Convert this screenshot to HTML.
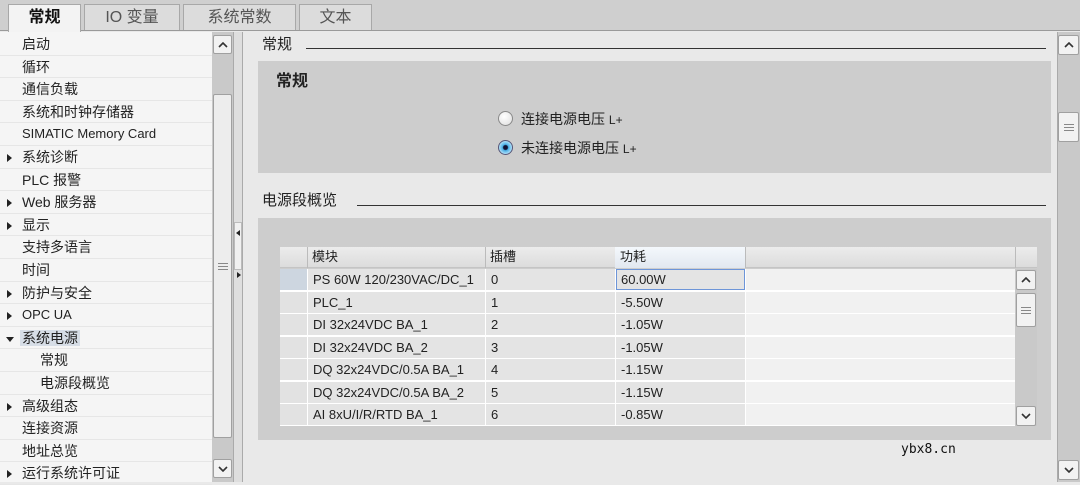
<!DOCTYPE html>
<html><head><meta charset="utf-8"><style>
*{margin:0;padding:0;box-sizing:border-box}
body{width:1080px;height:482px;overflow:hidden;background:#e9e9e9;font-family:"Liberation Sans","Noto Sans CJK SC",sans-serif;font-size:14px;color:#222;position:relative}
.a{position:absolute}
.tab{position:absolute;top:4px;height:26px;border:1px solid #a8a8a8;border-bottom:none;background:#dcdcdc;color:#555;font-size:16px;text-align:center;line-height:25px}
.row{position:absolute;left:0;width:212px;height:22.6px;border-bottom:1px solid #e6e6e6;line-height:22px;font-size:14px}
.tri{position:absolute;left:7px;top:8px;width:0;height:0;border-left:5px solid #222;border-top:4px solid transparent;border-bottom:4px solid transparent}
.btn{position:absolute;background:#f2f2f2;border:1px solid #a0a0a0;border-radius:2px;font-size:11px;text-align:center;color:#444;display:flex;align-items:center;justify-content:center}
.td{position:absolute;height:21px;line-height:21px;font-size:13px;padding-left:5px;color:#222}
.grip{width:10px;height:7px;border-top:1px solid #888;border-bottom:1px solid #888;position:relative}
.grip:after{content:"";position:absolute;left:0;right:0;top:2px;height:1px;background:#888}
</style></head><body>
<div class="a" style="left:0;top:0;width:1080px;height:31px;background:#cfcfcf;border-bottom:1px solid #9a9a9a"></div>
<div class="tab" style="left:8px;width:73px;background:#f3f3f3;color:#111;font-weight:bold;height:28px">常规</div>
<div class="tab" style="left:84px;width:96px">IO 变量</div>
<div class="tab" style="left:183px;width:113px">系统常数</div>
<div class="tab" style="left:299px;width:73px">文本</div>

<div class="a" style="left:0;top:32px;width:212px;height:450px;background:#f5f5f5"></div>
<div class="row" style="top:33px;padding-left:22px">启动</div>
<div class="row" style="top:55.6px;padding-left:22px">循环</div>
<div class="row" style="top:78.2px;padding-left:22px">通信负载</div>
<div class="row" style="top:100.8px;padding-left:22px">系统和时钟存储器</div>
<div class="row" style="top:123.4px;padding-left:22px;font-size:13px">SIMATIC Memory Card</div>
<div class="row" style="top:146px;padding-left:22px"><i class="tri"></i>系统诊断</div>
<div class="row" style="top:168.6px;padding-left:22px">PLC 报警</div>
<div class="row" style="top:191.2px;padding-left:22px"><i class="tri"></i>Web 服务器</div>
<div class="row" style="top:213.8px;padding-left:22px"><i class="tri"></i>显示</div>
<div class="row" style="top:236.4px;padding-left:22px">支持多语言</div>
<div class="row" style="top:259px;padding-left:22px">时间</div>
<div class="row" style="top:281.6px;padding-left:22px"><i class="tri"></i>防护与安全</div>
<div class="row" style="top:304.2px;padding-left:22px;font-size:13px"><i class="tri"></i>OPC UA</div>
<div class="row" style="top:326.8px;padding-left:20px"><i class="tri" style="left:6px;top:10px;border-top:5px solid #222;border-left:4px solid transparent;border-right:4px solid transparent;border-bottom:none"></i><span style="background:#d6dde6;padding:0 2px">系统电源</span></div>
<div class="row" style="top:349.4px;padding-left:40px">常规</div>
<div class="row" style="top:372px;padding-left:40px">电源段概览</div>
<div class="row" style="top:394.6px;padding-left:22px"><i class="tri"></i>高级组态</div>
<div class="row" style="top:417.2px;padding-left:22px">连接资源</div>
<div class="row" style="top:439.8px;padding-left:22px">地址总览</div>
<div class="row" style="top:462.4px;padding-left:22px"><i class="tri"></i>运行系统许可证</div>

<div class="a" style="left:212px;top:32px;width:21px;height:450px;background:#c9c9c9"></div>
<div class="btn" style="left:213px;top:35px;width:19px;height:19px"><svg width="10" height="6"><path d="M1 5L5 1L9 5" fill="none" stroke="#333" stroke-width="1.6"/></svg></div>
<div class="btn" style="left:213px;top:94px;width:19px;height:344px;background:#ededed"><div class="grip"></div></div>
<div class="btn" style="left:213px;top:459px;width:19px;height:19px"><svg width="10" height="6"><path d="M1 1L5 5L9 1" fill="none" stroke="#333" stroke-width="1.6"/></svg></div>

<div class="a" style="left:233px;top:32px;width:10px;height:450px;background:#dedede;border-left:1px solid #aaa;border-right:1px solid #aaa"></div>
<div class="a" style="left:234px;top:222px;width:8px;height:48px;background:#f0f0f0;border:1px solid #bbb"></div>
<div class="a" style="left:236px;top:230px;border-right:4px solid #222;border-top:3px solid transparent;border-bottom:3px solid transparent"></div>
<div class="a" style="left:237px;top:272px;border-left:4px solid #222;border-top:3px solid transparent;border-bottom:3px solid transparent"></div>

<div class="a" style="left:262px;top:33px;font-size:15px">常规</div>
<div class="a" style="left:306px;top:48px;width:740px;height:1px;background:#333"></div>
<div class="a" style="left:258px;top:61px;width:793px;height:112px;background:#cdcdcd"></div>
<div class="a" style="left:276px;top:67px;font-size:16px;font-weight:bold">常规</div>
<div class="a" style="left:498px;top:111px;width:15px;height:15px;border-radius:50%;border:1px solid #888;background:radial-gradient(circle at 40% 35%,#fff,#ddd)"></div>
<div class="a" style="left:521px;top:109px;font-size:14px">连接电源电压 <span style="font-size:12px">L+</span></div>
<div class="a" style="left:498px;top:140px;width:15px;height:15px;border-radius:50%;border:1px solid #557;background:radial-gradient(circle,#113 0 2px,#4ab0e8 3px,#bfe6fa 7px)"></div>
<div class="a" style="left:521px;top:138px;font-size:14px">未连接电源电压 <span style="font-size:12px">L+</span></div>

<div class="a" style="left:262px;top:189px;font-size:15px">电源段概览</div>
<div class="a" style="left:357px;top:205px;width:689px;height:1px;background:#333"></div>
<div class="a" style="left:258px;top:218px;width:793px;height:222px;background:#cdcdcd"></div>

<div class="a" style="left:280px;top:247px;width:757px;height:21px;background:linear-gradient(#ececec,#dcdcdc);border-bottom:1px solid #c4c4c4"></div>
<div class="a" style="left:307px;top:247px;width:1px;height:21px;background:#bbb"></div>
<div class="a" style="left:485px;top:247px;width:1px;height:21px;background:#bbb"></div>
<div class="a" style="left:615px;top:247px;width:130px;height:21px;background:linear-gradient(#f4f8fc,#e2e8f0)"></div>
<div class="a" style="left:745px;top:247px;width:1px;height:21px;background:#bbb"></div>
<div class="a" style="left:1015px;top:247px;width:1px;height:21px;background:#bbb"></div>
<div class="td" style="left:307px;top:246px">模块</div>
<div class="td" style="left:485px;top:246px">插槽</div>
<div class="td" style="left:615px;top:246px">功耗</div>

<div class="a" style="left:280px;top:269px;width:735px;height:157px;background:#fff"></div>
<div id="rows"></div>
<div class="a" style="left:1015px;top:269px;width:22px;height:157px;background:#c9c9c9"></div>
<div class="btn" style="left:1016px;top:270px;width:20px;height:20px"><svg width="10" height="6"><path d="M1 5L5 1L9 5" fill="none" stroke="#333" stroke-width="1.6"/></svg></div>
<div class="btn" style="left:1016px;top:293px;width:20px;height:34px"><div class="grip"></div></div>
<div class="btn" style="left:1016px;top:406px;width:20px;height:20px"><svg width="10" height="6"><path d="M1 1L5 5L9 1" fill="none" stroke="#333" stroke-width="1.6"/></svg></div>

<div class="a" style="left:1057px;top:32px;width:23px;height:450px;background:#c9c9c9;border-left:1px solid #aaa"></div>
<div class="btn" style="left:1058px;top:35px;width:21px;height:20px"><svg width="10" height="6"><path d="M1 5L5 1L9 5" fill="none" stroke="#333" stroke-width="1.6"/></svg></div>
<div class="btn" style="left:1058px;top:112px;width:21px;height:30px"><div class="grip"></div></div>
<div class="btn" style="left:1058px;top:460px;width:21px;height:20px"><svg width="10" height="6"><path d="M1 1L5 5L9 1" fill="none" stroke="#333" stroke-width="1.6"/></svg></div>

<div class="a" style="left:901px;top:442px;font-family:'DejaVu Sans Mono','Liberation Mono',monospace;font-size:13px;color:#111">ybx8.cn</div>

<script>
var d=[["PS 60W 120/230VAC/DC_1","0","60.00W"],["PLC_1","1","-5.50W"],["DI 32x24VDC BA_1","2","-1.05W"],["DI 32x24VDC BA_2","3","-1.05W"],["DQ 32x24VDC/0.5A BA_1","4","-1.15W"],["DQ 32x24VDC/0.5A BA_2","5","-1.15W"],["AI 8xU/I/R/RTD BA_1","6","-0.85W"]];
var h="";
d.forEach(function(r,i){var t=269+i*22.5;
h+='<div class="a" style="left:280px;top:'+t+'px;width:27px;height:21px;background:'+(i==0?'#cdd6e0':'#e2e2e2')+'"></div>';
h+='<div class="td" style="left:308px;top:'+t+'px;width:177px;background:#e4e4e4">'+r[0]+'</div>';
h+='<div class="td" style="left:486px;top:'+t+'px;width:129px;background:#e4e4e4">'+r[1]+'</div>';
h+='<div class="td" style="left:616px;top:'+t+'px;width:129px;background:#e4e4e4;'+(i==0?'border:1px solid #6d95d8;padding-left:4px;line-height:19px':'')+'">'+r[2]+'</div>';
h+='<div class="td" style="left:746px;top:'+t+'px;width:269px;background:#f1f1f1"></div>';});
document.getElementById("rows").innerHTML=h;
</script>
</body></html>
